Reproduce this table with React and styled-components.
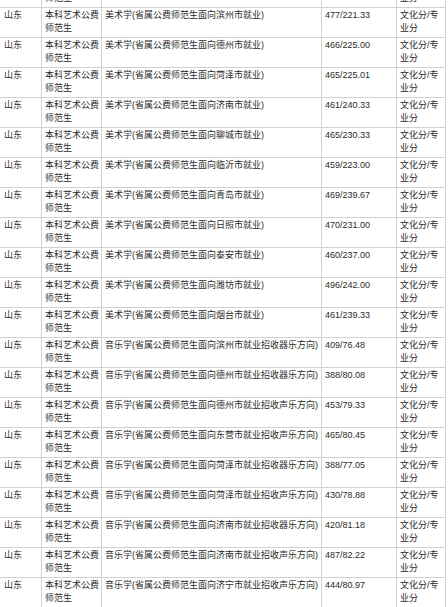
import React from "react";
import styled, { createGlobalStyle } from "styled-components";

const GlobalStyle = createGlobalStyle`
  html, body {
    margin: 0;
    padding: 0;
    background: #fff;
  }
  body {
    font-family: "Liberation Sans", "Noto Sans CJK SC", sans-serif;
    color: #2b2b2b;
  }
`;

const Viewport = styled.div`
  width: 448px;
  height: 607px;
  overflow: hidden;
`;

// the table is scrolled: the row above the first full one is cut at the top
const Table = styled.div`
  display: grid;
  grid-template-columns: 42px 60px 220px 75px 49px;
  margin-top: -22px;
  width: 446px;
`;

const Cell = styled.div`
  box-sizing: border-box;
  height: 30px;
  padding: 1px 2px 0 ${(props) => (props.first ? "4px" : "3px")};
  border-right: 1px solid #d2d2d2;
  border-bottom: 1px solid #d2d2d2;
  font-size: 9px;
  line-height: 13px;
  overflow: hidden;
  white-space: ${(props) => (props.nowrap ? "nowrap" : "normal")};
`;

const rows = [
  ["美术学(省属公费师范生面向东营市就业)", "468/228.50"],
  ["美术学(省属公费师范生面向滨州市就业)", "477/221.33"],
  ["美术学(省属公费师范生面向德州市就业)", "466/225.00"],
  ["美术学(省属公费师范生面向菏泽市就业)", "465/225.01"],
  ["美术学(省属公费师范生面向济南市就业)", "461/240.33"],
  ["美术学(省属公费师范生面向聊城市就业)", "465/230.33"],
  ["美术学(省属公费师范生面向临沂市就业)", "459/223.00"],
  ["美术学(省属公费师范生面向青岛市就业)", "469/239.67"],
  ["美术学(省属公费师范生面向日照市就业)", "470/231.00"],
  ["美术学(省属公费师范生面向泰安市就业)", "460/237.00"],
  ["美术学(省属公费师范生面向潍坊市就业)", "496/242.00"],
  ["美术学(省属公费师范生面向烟台市就业)", "461/239.33"],
  ["音乐学(省属公费师范生面向滨州市就业招收器乐方向)", "409/76.48"],
  ["音乐学(省属公费师范生面向德州市就业招收器乐方向)", "388/80.08"],
  ["音乐学(省属公费师范生面向德州市就业招收声乐方向)", "453/79.33"],
  ["音乐学(省属公费师范生面向东营市就业招收声乐方向)", "465/80.45"],
  ["音乐学(省属公费师范生面向菏泽市就业招收器乐方向)", "388/77.05"],
  ["音乐学(省属公费师范生面向菏泽市就业招收声乐方向)", "430/78.88"],
  ["音乐学(省属公费师范生面向济南市就业招收器乐方向)", "420/81.18"],
  ["音乐学(省属公费师范生面向济南市就业招收声乐方向)", "487/82.22"],
  ["音乐学(省属公费师范生面向济宁市就业招收声乐方向)", "444/80.97"],
];

export default function App() {
  return (
    <>
      <GlobalStyle />
      <Viewport>
        <Table>
          {rows.map(([major, score], i) => (
            <React.Fragment key={i}>
              <Cell first>山东</Cell>
              <Cell>本科艺术公费师范生</Cell>
              <Cell nowrap>{major}</Cell>
              <Cell nowrap>{score}</Cell>
              <Cell>文化分/专业分</Cell>
            </React.Fragment>
          ))}
        </Table>
      </Viewport>
    </>
  );
}
